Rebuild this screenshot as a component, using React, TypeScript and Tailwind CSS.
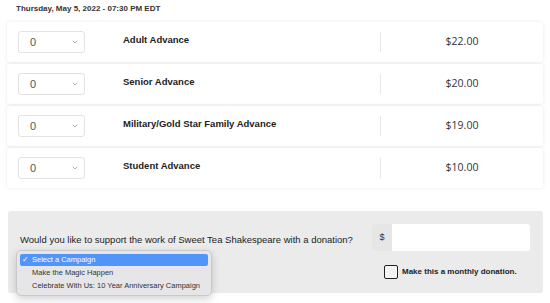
import { ChevronDown } from 'lucide-react';

const tickets = [
  { name: 'Adult Advance', price: '$22.00' },
  { name: 'Senior Advance', price: '$20.00' },
  { name: 'Military/Gold Star Family Advance', price: '$19.00' },
  { name: 'Student Advance', price: '$10.00' },
];

const campaigns = ['Make the Magic Happen', 'Celebrate With Us: 10 Year Anniversary Campaign'];

function TicketRow({ name, price }: { name: string; price: string }) {
  return (
    <div className="flex h-[40px] items-center rounded-[3px] bg-white shadow-[0_0_4px_rgba(0,0,0,0.09)]">
      <div className="ml-[11px] flex h-[22px] w-[67px] items-center justify-between rounded-[3px] border border-[#e3e3e3] bg-white pl-[11px] pr-[5px] text-[11px] text-[#555]">
        <span>0</span>
        <ChevronDown size={8} strokeWidth={2} className="text-[#888]" />
      </div>
      <div className="ml-[38px] w-[257px] -translate-y-[2px] text-[9.5px] font-bold text-[#222]">{name}</div>
      <div className="h-[20px] w-px bg-[#e6e6e6]" />
      <div className="flex-1 text-center font-['Open_Sans',sans-serif] text-[10.5px] text-[#333]">{price}</div>
    </div>
  );
}

export default function App() {
  return (
    <div className="relative h-[303px] w-[550px] overflow-hidden bg-white font-['Liberation_Sans',Arial,sans-serif]">
      <div className="pl-[16px] pt-[4px] text-[8px] font-bold leading-[10px] text-[#333]">
        Thursday, May 5, 2022 - 07:30 PM EDT
      </div>

      <div className="mx-[7px] mt-[8px] flex w-[536px] flex-col gap-[2px]">
        {tickets.map((t) => (
          <TicketRow key={t.name} {...t} />
        ))}
      </div>

      <div className="ml-[8px] mt-[23px] flex h-[82px] w-[535px] rounded-[3px] bg-[#ebebeb]">
        <div className="ml-[12px] mt-[23px] w-[352px] whitespace-nowrap text-[9.5px] leading-[12px] text-[#222]">
          Would you like to support the work of Sweet Tea Shakespeare with a donation?
        </div>
        <div className="mt-[13px] flex w-[158px] flex-col items-end">
          <div className="flex h-[27px] w-[158px] rounded-[3px] bg-white">
            <div className="flex w-[20px] items-center justify-center rounded-l-[3px] bg-[#e6e6e6] text-[9px] text-[#333]">
              $
            </div>
            <div className="flex-1" />
          </div>
          <label className="mt-[14px] flex w-[146px] items-center gap-[4px]">
            <span className="h-[14px] w-[14px] rounded-[2px] border-[1.5px] border-[#222] bg-[#f4f4f4]" />
            <span className="text-[8px] font-bold text-[#222]">Make this a monthly donation.</span>
          </label>
        </div>
      </div>

      <div className="absolute left-[16px] top-[250px] w-[196px] rounded-[5px] border border-[#c9c9cc] bg-[#e6e6e8] px-[3px] py-[3px] shadow-[0_3px_8px_rgba(0,0,0,0.18)]">
        <div className="flex h-[12px] items-center whitespace-nowrap rounded-[2px] bg-[#5095f7] pl-[2px] text-[7.5px] text-white">
          <span className="w-[10px]">✓</span>Select a Campaign
        </div>
        {campaigns.map((c) => (
          <div key={c} className="flex h-[13px] items-center whitespace-nowrap pl-[12px] text-[7.5px] text-[#333]">
            {c}
          </div>
        ))}
      </div>
    </div>
  );
}
